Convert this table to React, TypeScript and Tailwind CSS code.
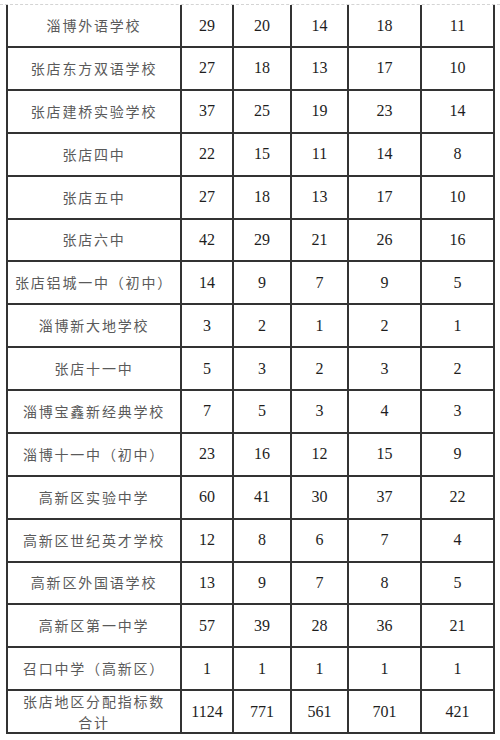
import React from "react";

const rows: [string, string[]][] = [
  ["淄博外语学校", ["29", "20", "14", "18", "11"]],
  ["张店东方双语学校", ["27", "18", "13", "17", "10"]],
  ["张店建桥实验学校", ["37", "25", "19", "23", "14"]],
  ["张店四中", ["22", "15", "11", "14", "8"]],
  ["张店五中", ["27", "18", "13", "17", "10"]],
  ["张店六中", ["42", "29", "21", "26", "16"]],
  ["张店铝城一中（初中）", ["14", "9", "7", "9", "5"]],
  ["淄博新大地学校", ["3", "2", "1", "2", "1"]],
  ["张店十一中", ["5", "3", "2", "3", "2"]],
  ["淄博宝鑫新经典学校", ["7", "5", "3", "4", "3"]],
  ["淄博十一中（初中）", ["23", "16", "12", "15", "9"]],
  ["高新区实验中学", ["60", "41", "30", "37", "22"]],
  ["高新区世纪英才学校", ["12", "8", "6", "7", "4"]],
  ["高新区外国语学校", ["13", "9", "7", "8", "5"]],
  ["高新区第一中学", ["57", "39", "28", "36", "21"]],
  ["召口中学（高新区）", ["1", "1", "1", "1", "1"]],
];

function NameCell({ children }: { children: React.ReactNode }) {
  return (
    <div className="border-r-2 border-b-2 border-[#333] flex flex-col items-center justify-center text-[14px] tracking-[1.8px] leading-[21px] text-[#5a5a5a] font-['Noto_Sans_CJK_SC','Noto_Sans',sans-serif]">
      {children}
    </div>
  );
}

function NumCell({ value }: { value: string }) {
  return (
    <div className="border-r-2 border-b-2 border-[#333] flex items-center justify-center text-[16px] text-[#1e1e1e] font-['Liberation_Serif','Times_New_Roman',serif]">
      {value}
    </div>
  );
}

export default function App() {
  return (
    <div className="w-[500px] h-[740px] bg-white pt-[4px] overflow-hidden">
      <div className="w-full h-px border-t border-dashed border-[#d4d4d4]" />
      <div className="ml-[6px] w-[489px] border-l-2 border-[#333] grid grid-cols-[174px_52px_58px_57px_73px_73px] grid-rows-[43px_repeat(16,42.875px)]">
        {rows.map(([name, nums], i) => (
          <React.Fragment key={i}>
            <NameCell>{name}</NameCell>
            {nums.map((n, j) => (
              <NumCell key={j} value={n} />
            ))}
          </React.Fragment>
        ))}
        <NameCell>
          <span>张店地区分配指标数</span>
          <span>合计</span>
        </NameCell>
        {["1124", "771", "561", "701", "421"].map((n, j) => (
          <NumCell key={j} value={n} />
        ))}
      </div>
    </div>
  );
}
